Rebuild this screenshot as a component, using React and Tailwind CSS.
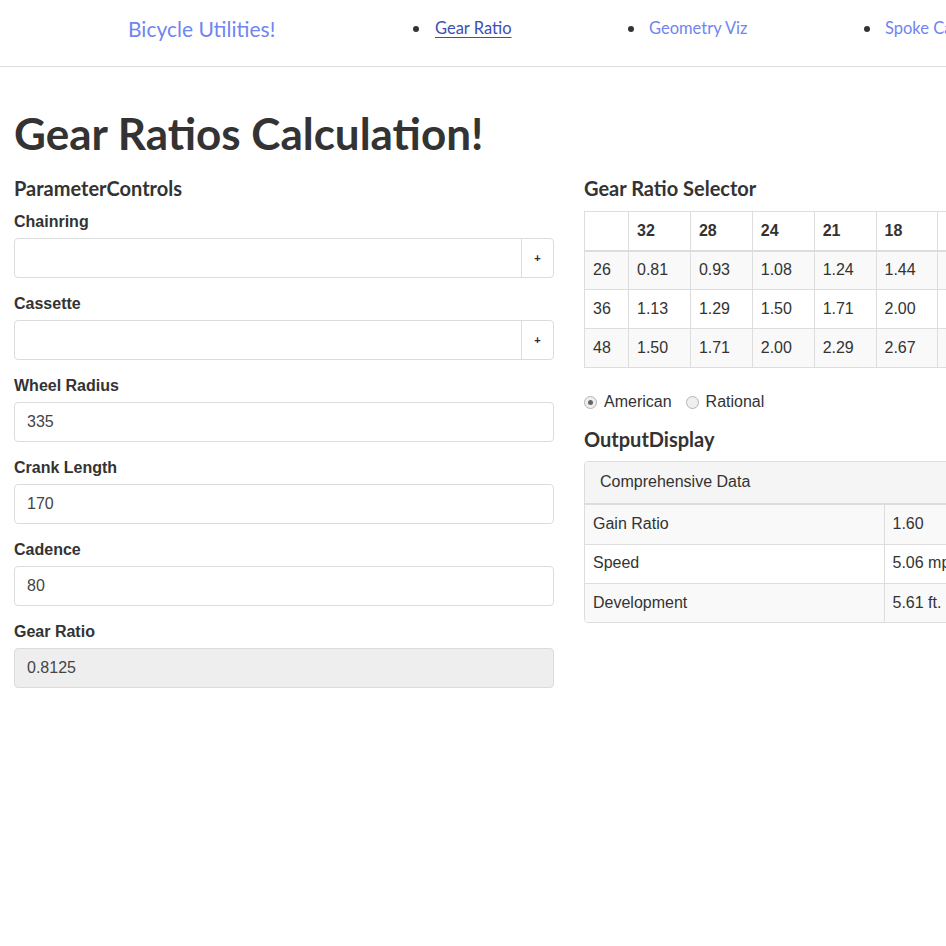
const rings = [26, 36, 48]
const cogs = [32, 28, 24, 21, 18, 16, 14, 12]

const fields = [
  { label: "Wheel Radius", value: "335" },
  { label: "Crank Length", value: "170" },
  { label: "Cadence", value: "80" },
]

const output = [
  ["Gain Ratio", "1.60"],
  ["Speed", "5.06 mph"],
  ["Development", "5.61 ft."],
]

function AddonInput({ label }) {
  return (
    <div className="mb-[15px]">
      <label className="block mb-[5px] font-bold leading-[22px]">{label}</label>
      <div className="flex h-[40px] border border-[#dcdcdc] rounded-[4px] bg-white">
        <div className="flex-1" />
        <div className="w-[32px] border-l border-[#dcdcdc] flex items-center justify-center text-[11px] font-bold text-[#2a2a3a]">
          +
        </div>
      </div>
    </div>
  )
}

function TextInput({ label, value, disabled }) {
  return (
    <div className="mb-[15px]">
      <label className="block mb-[5px] font-bold leading-[22px]">{label}</label>
      <div
        className={
          "h-[40px] border border-[#dcdcdc] rounded-[4px] px-[12px] flex items-center text-[#444] " +
          (disabled ? "bg-[#eeeeee]" : "bg-white")
        }
      >
        {value}
      </div>
    </div>
  )
}

function Radio({ checked, label }) {
  return (
    <label className="flex items-center gap-[7px] mr-[14px]">
      <span className="w-[13px] h-[13px] rounded-full border border-[#b4b4b4] bg-[#efefef] flex items-center justify-center">
        {checked && <span className="w-[5px] h-[5px] rounded-full bg-[#666]" />}
      </span>
      <span>{label}</span>
    </label>
  )
}

export default function App() {
  const heading = { fontFamily: "Lato, 'Open Sans', sans-serif" }

  return (
    <div
      className="w-full min-h-screen overflow-hidden bg-white text-[#333] text-[16px] leading-[1.42857]"
      style={{ fontFamily: "'Liberation Sans', Arial, sans-serif" }}
    >
      {/* Navbar */}
      <div className="w-[1170px] h-[67px] border-b border-[#dddddd] flex items-center pb-[8px]" style={heading}>
        <div className="ml-[128px] w-[285px]">
          <a className="text-[21px] text-[#6f85f0]">Bicycle Utilities!</a>
        </div>
        <ul className="flex items-center">
          <li className="flex items-center w-[215px]">
            <span className="w-[6px] h-[6px] rounded-full bg-[#333] mr-[16px]" />
            <a className="text-[16.5px] text-[#3d4fb5] underline underline-offset-[3px]">Gear Ratio</a>
          </li>
          <li className="flex items-center w-[236px]">
            <span className="w-[6px] h-[6px] rounded-full bg-[#333] mr-[15px]" />
            <a className="text-[16.5px] text-[#6f85f0]">Geometry Viz</a>
          </li>
          <li className="flex items-center">
            <span className="w-[6px] h-[6px] rounded-full bg-[#333] mr-[15px]" />
            <a className="text-[16.5px] text-[#6f85f0] whitespace-nowrap">Spoke Calculator</a>
          </li>
        </ul>
      </div>

      <div className="w-[1170px] px-[14px]">
        <h1 className="text-[44px] font-bold leading-[1.1] mt-[42px] mb-[20px]" style={heading}>
          Gear Ratios Calculation!
        </h1>

        <div className="flex gap-[30px]">
          {/* Left column */}
          <div className="w-[540px]">
            <h3 className="text-[20px] font-bold leading-[1.1] mb-[12px]" style={heading}>
              ParameterControls
            </h3>
            <AddonInput label="Chainring" />
            <AddonInput label="Cassette" />
            {fields.map((f) => (
              <TextInput key={f.label} label={f.label} value={f.value} />
            ))}
            <TextInput label="Gear Ratio" value="0.8125" disabled />
          </div>

          {/* Right column */}
          <div className="w-[540px]">
            <h3 className="text-[20px] font-bold leading-[1.1] mb-[12px]" style={heading}>
              Gear Ratio Selector
            </h3>
            <table className="w-[540px] table-fixed border-collapse border border-[#dddddd]">
              <thead>
                <tr className="h-[39px]">
                  <th className="w-[44px] border border-[#dddddd] border-b-2" />
                  {cogs.map((c) => (
                    <th key={c} className="border border-[#dddddd] border-b-2 text-left font-bold px-[8px]">
                      {c}
                    </th>
                  ))}
                </tr>
              </thead>
              <tbody>
                {rings.map((r, i) => (
                  <tr key={r} className={"h-[39px] " + (i % 2 === 0 ? "bg-[#f9f9f9]" : "bg-white")}>
                    <td className="border border-[#dddddd] px-[8px]">{r}</td>
                    {cogs.map((c) => (
                      <td key={c} className="border border-[#dddddd] px-[8px]">
                        {(r / c).toFixed(2)}
                      </td>
                    ))}
                  </tr>
                ))}
              </tbody>
            </table>

            <div className="flex items-center mt-[23px] mb-[14px]">
              <Radio checked label="American" />
              <Radio label="Rational" />
            </div>

            <h3 className="text-[20px] font-bold leading-[1.1] mb-[11px]" style={heading}>
              OutputDisplay
            </h3>
            <div className="border border-[#dddddd] rounded-[4px] overflow-hidden">
              <div className="h-[43px] bg-[#f5f5f5] px-[15px] flex items-center border-b-2 border-[#dddddd]">
                Comprehensive Data
              </div>
              <table className="w-full border-collapse">
                <tbody>
                  {output.map(([k, v], i) => {
                    const bg = i % 2 === 0 ? "bg-[#f9f9f9]" : "bg-white"
                    const top = i > 0 ? " border-t border-[#dddddd]" : ""
                    return (
                      <tr key={k} className="h-[39px]">
                        <td className={"w-[299px] px-[8px] border-r border-[#dddddd] " + bg + top}>{k}</td>
                        <td className={"px-[8px] " + bg + top}>{v}</td>
                      </tr>
                    )
                  })}
                </tbody>
              </table>
            </div>
          </div>
        </div>
      </div>
    </div>
  )
}
